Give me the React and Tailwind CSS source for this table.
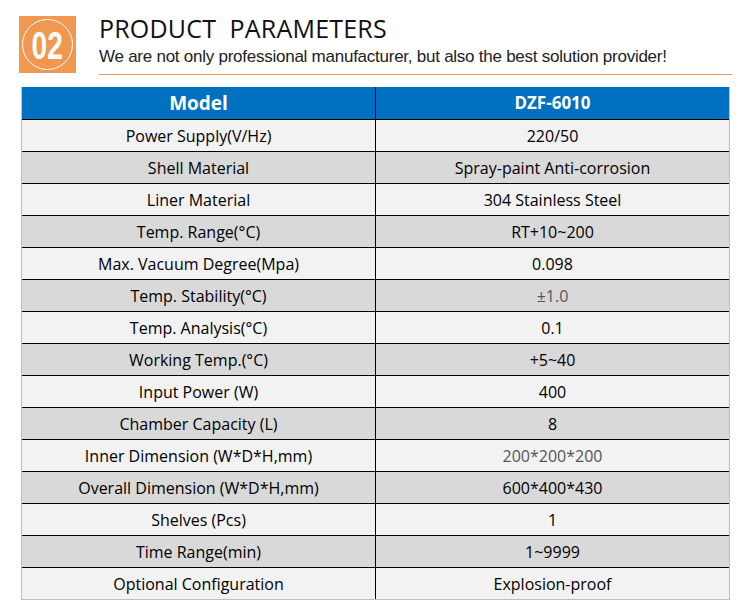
import React from "react";

const rows = [
  ["Power Supply(V/Hz)", "220/50"],
  ["Shell Material", "Spray-paint Anti-corrosion"],
  ["Liner Material", "304 Stainless Steel"],
  ["Temp. Range(°C)", "RT+10~200"],
  ["Max. Vacuum Degree(Mpa)", "0.098"],
  ["Temp. Stability(°C)", "±1.0"],
  ["Temp. Analysis(°C)", "0.1"],
  ["Working Temp.(°C)", "+5~40"],
  ["Input Power (W)", "400"],
  ["Chamber Capacity (L)", "8"],
  ["Inner Dimension (W*D*H,mm)", "200*200*200"],
  ["Overall Dimension (W*D*H,mm)", "600*400*430"],
  ["Shelves (Pcs)", "1"],
  ["Time Range(min)", "1~9999"],
  ["Optional Configuration", "Explosion-proof"],
];

export default function App() {
  return (
    <div className="w-[750px] h-[613px] bg-white relative" style={{ fontFamily: '"Open Sans", "Noto Sans", sans-serif' }}>
      <div className="flex pt-[16px] pl-[19px]">
        <div className="w-[57px] h-[57px] bg-[#f0984f] flex items-center justify-center shrink-0">
          <div className="w-[51px] h-[51px] rounded-full border border-white flex items-center justify-center">
            <span className="text-white text-[38px] font-bold leading-none scale-x-[0.74] mt-[2px]" style={{ fontFamily: '"Liberation Sans", sans-serif' }}>02</span>
          </div>
        </div>
        <div className="ml-[23px] w-[633px]">
          <div className="text-[25px] leading-[26px] text-[#111] tracking-[0.2px] mt-[-1px]" style={{ fontFamily: '"Open Sans", sans-serif' }}>PRODUCT&nbsp;&nbsp;PARAMETERS</div>
          <div className="text-[17px] leading-[20px] text-[#222] mt-[6px] tracking-[-0.25px]" style={{ fontFamily: '"Liberation Sans", Arial, sans-serif' }}>We are not only professional manufacturer, but also the best solution provider!</div>
          <div className="h-px bg-[#f0984f] mt-[7px]"></div>
        </div>
      </div>
      <div className="ml-[21px] mt-[12px] w-[709px] border border-[#bfbfbf] border-t-0">
        <div className="flex h-[32px] bg-[#0070c0] text-white font-bold">
          <div className="w-[354px] border-r border-black flex items-center justify-center text-[19px]">Model</div>
          <div className="flex-1 flex items-center justify-center text-[17px]">DZF-6010</div>
        </div>
        {rows.map(([k, v], i) => (
          <div key={i} className={`flex h-[32px] border-t border-black text-[16px] text-black ${i % 2 === 0 ? "bg-[#f2f2f2]" : "bg-[#d9d9d9]"}`}>
            <div className="w-[354px] border-r border-black flex items-center justify-center">{k}</div>
            <div className={`flex-1 flex items-center justify-center ${v === "200*200*200" || v === "±1.0" ? "text-[#555]" : ""}`}>{v}</div>
          </div>
        ))}
      </div>
    </div>
  );
}
